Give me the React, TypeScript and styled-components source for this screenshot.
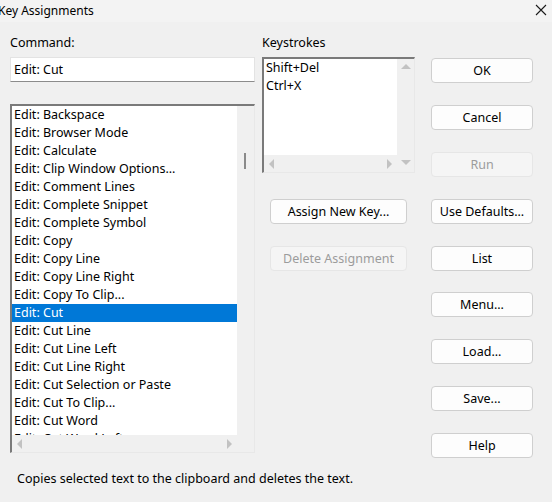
import React, { useState } from "react";
import styled, { createGlobalStyle } from "styled-components";

const Global = createGlobalStyle`
  html, body {
    margin: 0;
    padding: 0;
    background: #f0f0f0;
  }
  body {
    font-family: "Noto Sans", "Open Sans", sans-serif;
    font-size: 12.5px;
    color: #000;
  }
`;

const Dialog = styled.div`
  width: 552px;
  height: 502px;
  background: #f0f0f0;
  overflow: hidden;
`;

const TitleBar = styled.div`
  height: 22px;
  background: #f3f3f3;
  display: flex;
  align-items: center;
  justify-content: space-between;
  padding-right: 5px;
`;

const Title = styled.div`
  margin-left: -2px;
  font-size: 12px;
  line-height: 20px;
`;

const Close = styled.div`
  width: 12px;
  height: 12px;
  display: flex;
  margin-top: -2px;
`;

const Body = styled.div`
  display: flex;
  padding: 14px 0 0 10px;
`;

const Column = styled.div<{ $w: number }>`
  width: ${(p) => p.$w}px;
  display: flex;
  flex-direction: column;
`;

const Label = styled.div`
  height: 14px;
  line-height: 14px;
  margin-bottom: 7px;
`;

const TextInput = styled.div`
  height: 25px;
  box-sizing: border-box;
  background: #fff;
  border: 1px solid #e3e3e3;
  border-bottom: 1px solid #8c8c8c;
  padding: 0 3px;
  line-height: 23px;
`;

const ListBox = styled.div<{ $h: number }>`
  position: relative;
  height: ${(p) => p.$h}px;
  box-sizing: border-box;
  background: #fff;
  border-top: 2px solid #7a7a7a;
  border-left: 2px solid #7a7a7a;
  border-right: 1px solid #e8e8e8;
  border-bottom: 1px solid #e8e8e8;
  display: grid;
  grid-template-columns: 1fr 17px;
  grid-template-rows: 1fr 17px;
  overflow: hidden;
`;

const Rows = styled.div`
  overflow: hidden;
`;

const Row = styled.div<{ $sel?: boolean }>`
  height: 18px;
  line-height: 18px;
  padding-left: 2px;
  white-space: nowrap;
  background: ${(p) => (p.$sel ? "#0078d7" : "transparent")};
  color: ${(p) => (p.$sel ? "#fff" : "#000")};
`;

const VScroll = styled.div`
  background: #f0f0f0;
  position: relative;
  display: flex;
  flex-direction: column;
  align-items: center;
  justify-content: space-between;
  padding: 5px 0;
`;

const Thumb = styled.div<{ $top: number }>`
  position: absolute;
  left: 7px;
  top: ${(p) => p.$top}px;
  width: 2px;
  height: 16px;
  background: #8a8a8a;
`;

const HScroll = styled.div`
  background: #f0f0f0;
  display: flex;
  align-items: center;
  justify-content: space-between;
  padding: 0 5px;
`;

const Corner = styled.div`
  background: #f0f0f0;
`;

const Arrow = styled.span<{ $dir: "l" | "r" | "u" | "d" }>`
  width: 0;
  height: 0;
  border-style: solid;
  ${(p) =>
    p.$dir === "l"
      ? "border-width: 5px 5px 5px 0; border-color: transparent #c2c2c2 transparent transparent;"
      : p.$dir === "r"
      ? "border-width: 5px 0 5px 5px; border-color: transparent transparent transparent #c2c2c2;"
      : p.$dir === "u"
      ? "border-width: 0 5px 5px 5px; border-color: transparent transparent #c2c2c2 transparent;"
      : "border-width: 5px 5px 0 5px; border-color: #c2c2c2 transparent transparent transparent;"}
`;

const Button = styled.button<{ $off?: boolean }>`
  height: 25px;
  box-sizing: border-box;
  border-radius: 4px;
  border: 1px solid ${(p) => (p.$off ? "#e6e6e6" : "#cfcfcf")};
  background: ${(p) => (p.$off ? "#f5f5f5" : "#fdfdfd")};
  color: ${(p) => (p.$off ? "#9c9c9c" : "#000")};
  font-family: inherit;
  font-size: 12.5px;
  padding: 0;
  margin: 0;
`;

const MidButtons = styled.div`
  display: flex;
  flex-direction: column;
  gap: 22px;
  margin: 26px 0 0 8px;
  width: 137px;
`;

const RightButtons = styled.div`
  display: flex;
  flex-direction: column;
  gap: 21.9px;
  padding-top: 22px;
`;

const Status = styled.div`
  padding: 13px 0 0 17px;
  line-height: 16px;
`;

const commands = [
  "Backspace",
  "Browser Mode",
  "Calculate",
  "Clip Window Options...",
  "Comment Lines",
  "Complete Snippet",
  "Complete Symbol",
  "Copy",
  "Copy Line",
  "Copy Line Right",
  "Copy To Clip...",
  "Cut",
  "Cut Line",
  "Cut Line Left",
  "Cut Line Right",
  "Cut Selection or Paste",
  "Cut To Clip...",
  "Cut Word",
  "Cut Word Left",
];

const rightButtons = [
  { t: "OK" },
  { t: "Cancel" },
  { t: "Run", off: true },
  { t: "Use Defaults..." },
  { t: "List" },
  { t: "Menu..." },
  { t: "Load..." },
  { t: "Save..." },
  { t: "Help" },
];

export default function App() {
  const [sel, setSel] = useState("Cut");
  return (
    <Dialog>
      <Global />
      <TitleBar>
        <Title>Key Assignments</Title>
        <Close>
          <svg width="12" height="12" viewBox="0 0 12 12">
            <path d="M1 1 L11 11 M11 1 L1 11" stroke="#1a1a1a" strokeWidth="1.1" />
          </svg>
        </Close>
      </TitleBar>
      <Body>
        <Column $w={245}>
          <Label>Command:</Label>
          <TextInput>Edit: {sel}</TextInput>
          <div style={{ height: 22 }} />
          <ListBox $h={349}>
            <Rows>
              {commands.map((c) => (
                <Row key={c} $sel={c === sel} onClick={() => setSel(c)}>
                  Edit: {c}
                </Row>
              ))}
            </Rows>
            <VScroll>
              <Thumb $top={47} />
            </VScroll>
            <HScroll>
              <Arrow $dir="l" />
              <Arrow $dir="r" />
            </HScroll>
            <Corner />
          </ListBox>
        </Column>
        <Column $w={153} style={{ marginLeft: 7 }}>
          <Label>Keystrokes</Label>
          <ListBox $h={116}>
            <Rows>
              <Row>Shift+Del</Row>
              <Row>Ctrl+X</Row>
            </Rows>
            <VScroll>
              <Arrow $dir="u" />
            </VScroll>
            <HScroll>
              <Arrow $dir="l" />
              <Arrow $dir="r" />
            </HScroll>
            <VScroll>
              <Arrow $dir="d" />
            </VScroll>
          </ListBox>
          <MidButtons>
            <Button>Assign New Key...</Button>
            <Button $off>Delete Assignment</Button>
          </MidButtons>
        </Column>
        <Column $w={102} style={{ marginLeft: 16 }}>
          <RightButtons>
            {rightButtons.map((b) => (
              <Button key={b.t} $off={b.off}>
                {b.t}
              </Button>
            ))}
          </RightButtons>
        </Column>
      </Body>
      <Status>Copies selected text to the clipboard and deletes the text.</Status>
    </Dialog>
  );
}
